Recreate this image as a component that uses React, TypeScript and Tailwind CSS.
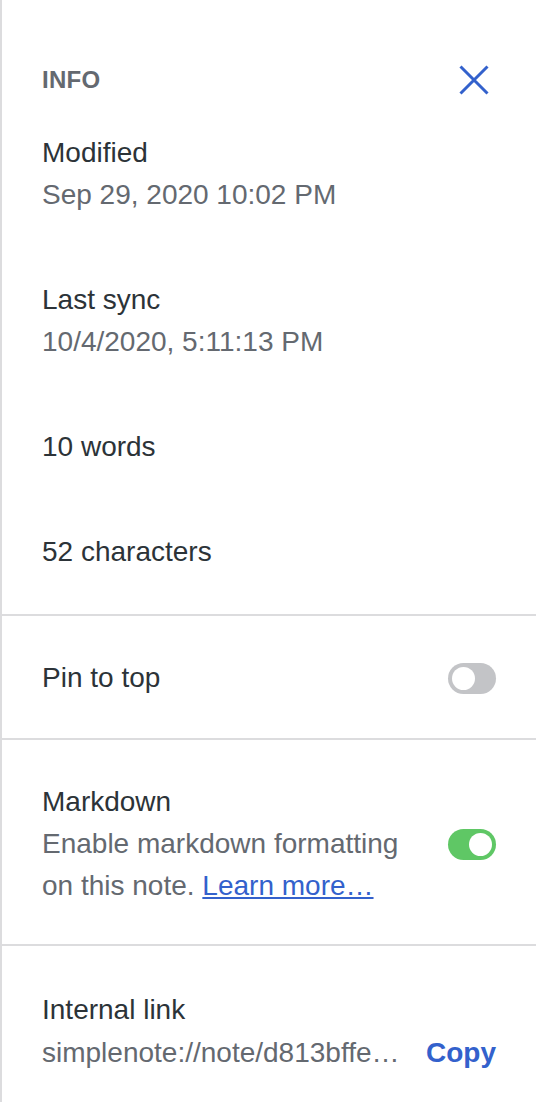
import React from "react";

function Toggle({ on }: { on: boolean }) {
  return (
    <div
      className={
        "relative w-[48px] h-[31px] rounded-full shrink-0 " +
        (on ? "bg-[#5fc765]" : "bg-[#c3c4c7]")
      }
    >
      <div
        className={
          "absolute top-[4px] w-[23px] h-[23px] rounded-full bg-white " +
          (on ? "left-[21px]" : "left-[4px]")
        }
      />
    </div>
  );
}

export default function App() {
  return (
    <div
      className="w-[536px] h-[1102px] bg-white border-l-2 border-[#dcdcde] overflow-hidden text-[28px] leading-[42px] text-[#2c3338]"
      style={{ fontFamily: '"Liberation Sans", Arial, sans-serif' }}
    >
      <section className="pt-[40px] pb-[41px] pl-[40px] pr-[40px]">
        <div className="h-[80px] flex items-center justify-between">
          <span className="text-[24px] font-bold text-[#646970] tracking-[0.3px]">INFO</span>
          <svg width="30" height="30" viewBox="0 0 30 30" className="mr-[7px]">
            <path d="M1.5 1.5 L28.5 28.5 M28.5 1.5 L1.5 28.5" stroke="#3361cc" strokeWidth="3" fill="none" />
          </svg>
        </div>
        <div className="mt-[12px] flex flex-col gap-[63px]">
          <div>
            <div>Modified</div>
            <div className="text-[#646970]">Sep 29, 2020 10:02 PM</div>
          </div>
          <div>
            <div>Last sync</div>
            <div className="text-[#646970]">10/4/2020, 5:11:13 PM</div>
          </div>
          <div>10 words</div>
          <div>52 characters</div>
        </div>
      </section>
      <div className="h-[2px] bg-[#dcdcde]" />
      <section className="pt-[41px] pb-[39px] px-[40px] flex items-center justify-between">
        <span>Pin to top</span>
        <Toggle on={false} />
      </section>
      <div className="h-[2px] bg-[#dcdcde]" />
      <section className="pt-[41px] pb-[37px] px-[40px] flex items-center gap-[24px]">
        <div className="flex-1 min-w-0">
          <div>Markdown</div>
          <div className="text-[#646970]">
            Enable markdown formatting on this note.{" "}
            <a href="#" className="text-[#3361cc] underline">Learn more…</a>
          </div>
        </div>
        <Toggle on={true} />
      </section>
      <div className="h-[2px] bg-[#dcdcde]" />
      <section className="pt-[42px] px-[40px] leading-[43px]">
        <div>Internal link</div>
        <div className="flex items-center gap-[12px]">
          <span className="flex-1 min-w-0 truncate text-[#646970]">
            simplenote://note/d813bffe0a1c4b2e9f7a6d5c3b2a1908
          </span>
          <span className="font-bold text-[#3361cc] shrink-0">Copy</span>
        </div>
      </section>
    </div>
  );
}
